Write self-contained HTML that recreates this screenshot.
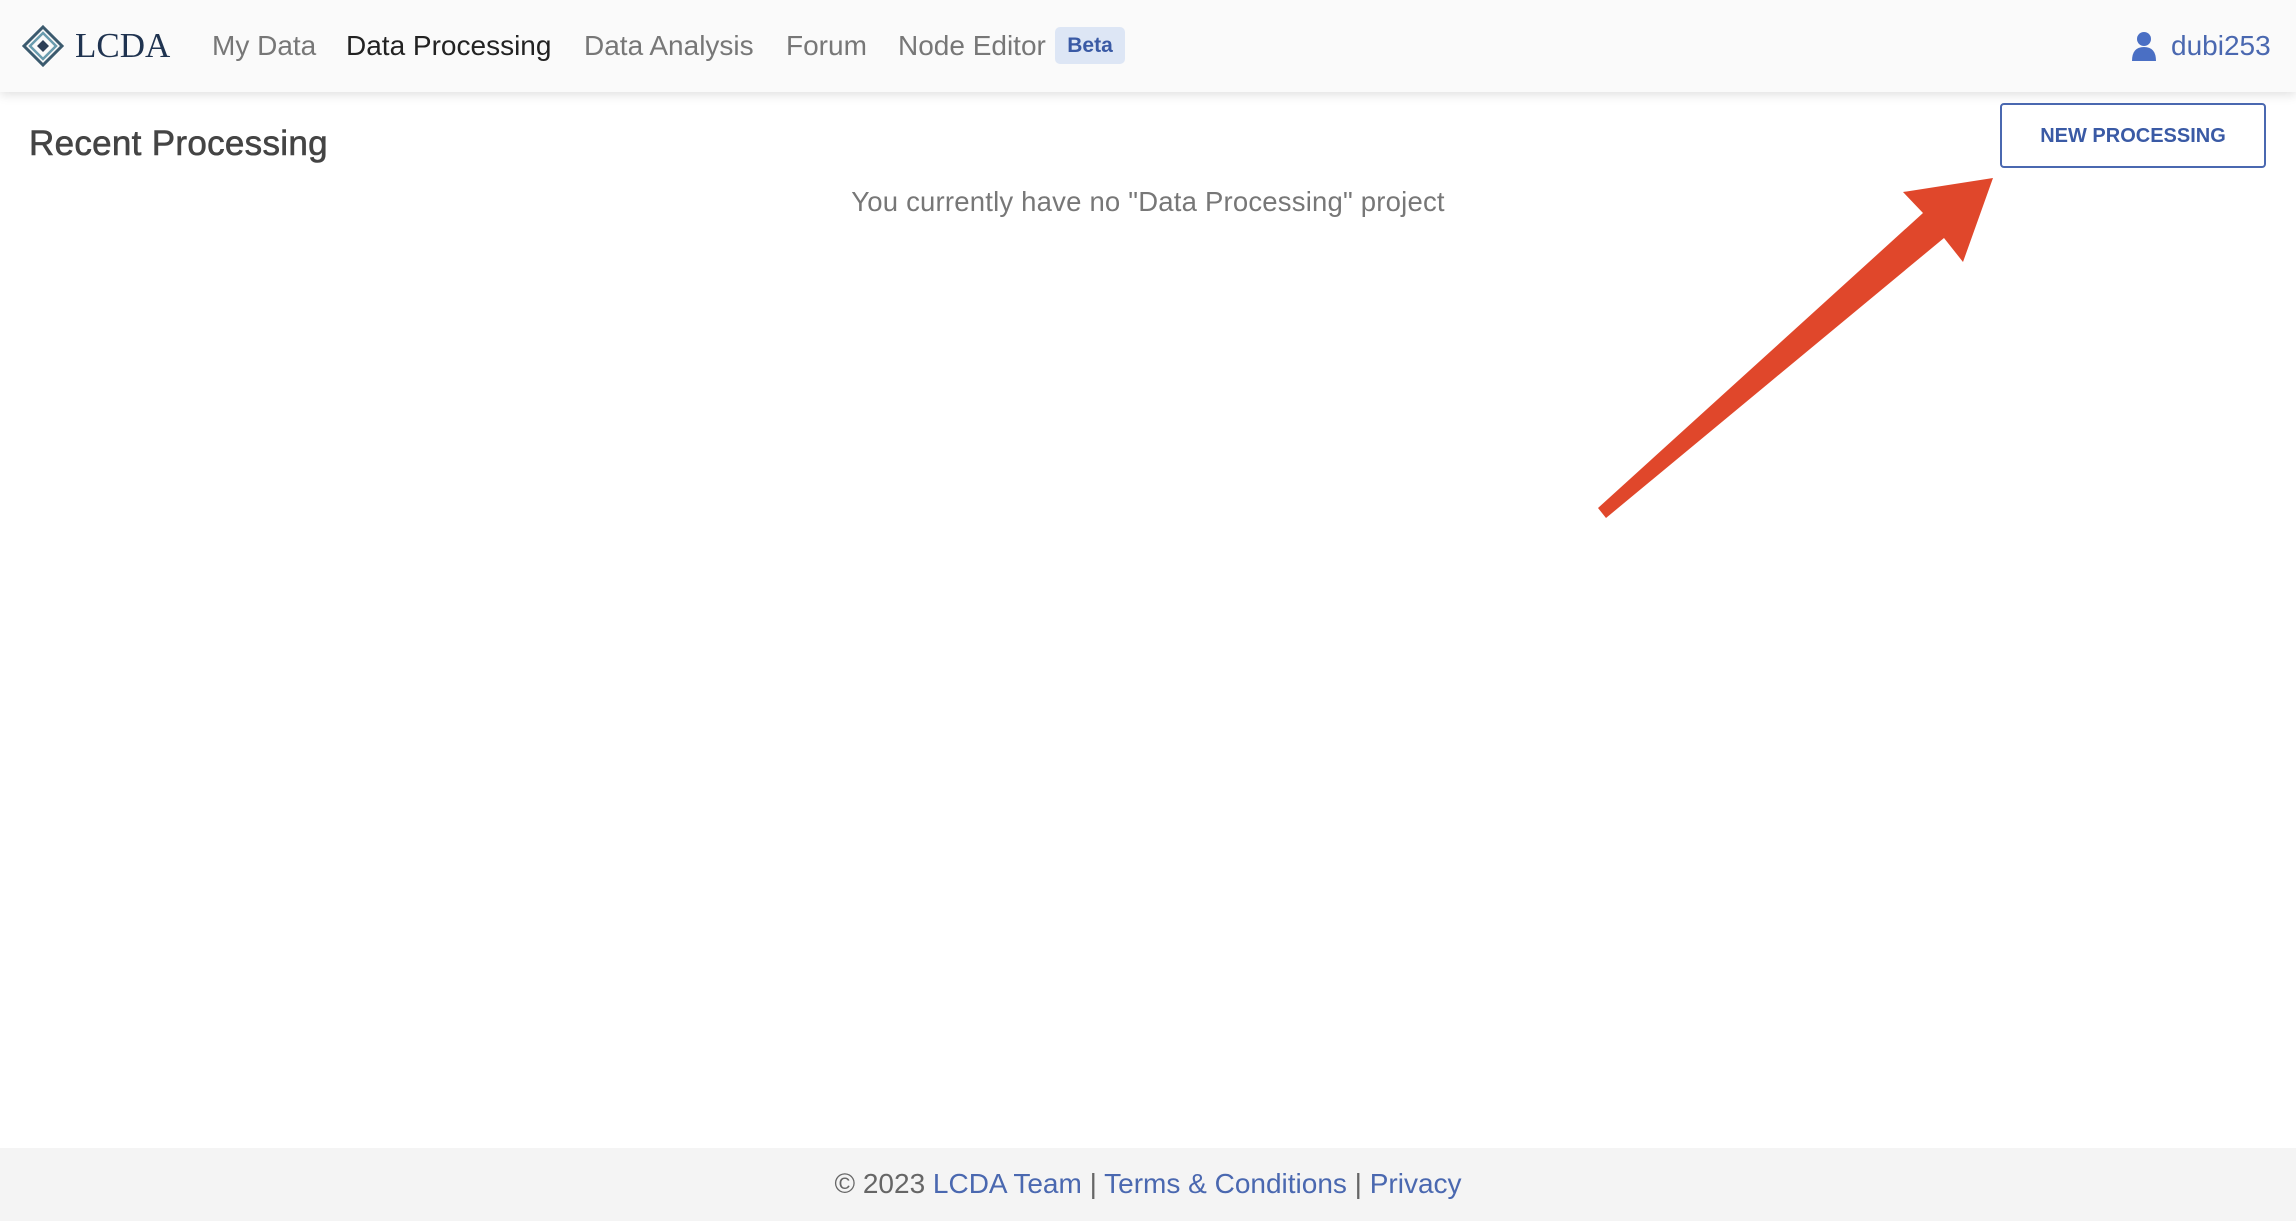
<!DOCTYPE html>
<html><head><meta charset="utf-8"><style>
html,body{margin:0;padding:0;width:2296px;height:1221px;background:#fff;overflow:hidden;font-family:"Liberation Sans",Roboto,sans-serif;position:relative}
.hdr{position:absolute;left:0;top:0;width:2296px;height:92px;background:#fafafa;box-shadow:0 3px 10px rgba(0,0,0,0.12)}
.t{position:absolute;white-space:nowrap;line-height:1}
.nav{font-size:28px;color:#777;top:32px}
.foot{position:absolute;left:0;top:1148px;width:2296px;height:73px;background:#f4f4f4}
.b{color:#4a68b0}
</style></head><body>
<div class="hdr">
<svg style="position:absolute;left:22px;top:25px" width="42" height="42" viewBox="0 0 42 42">
<path d="M21 2 L40 21 L21 40 L2 21 Z" fill="none" stroke="#3b5a6e" stroke-width="3"/>
<path d="M21 8 L34 21 L21 34 L8 21 Z" fill="none" stroke="#6a9cae" stroke-width="2.5"/>
<path d="M21 15 L27 21 L21 27 L15 21 Z" fill="#2c3e56"/>
</svg>
<div class="t" style="left:75px;top:28px;font-family:'Liberation Serif',serif;font-size:35px;color:#1f3350">LCDA</div>
<div class="t nav" style="left:212px">My Data</div>
<div class="t nav" style="left:346px;color:#222">Data Processing</div>
<div class="t nav" style="left:584px">Data Analysis</div>
<div class="t nav" style="left:786px">Forum</div>
<div class="t nav" style="left:898px">Node Editor</div>
<div style="position:absolute;left:1055px;top:27px;width:70px;height:37px;background:#dde6f5;border-radius:5px;color:#3a5aa5;font-weight:bold;font-size:21px;text-align:center;line-height:37px">Beta</div>
<svg style="position:absolute;left:2131px;top:31px" width="26" height="30" viewBox="0 0 26 30"><circle cx="13" cy="8" r="7" fill="#4a6fc4"/><path d="M1 30 Q1 16 13 16 Q25 16 25 30 Z" fill="#4a6fc4"/></svg>
<div class="t nav b" style="left:2171px">dubi253</div>
</div>
<div class="t" style="left:29px;top:126px;font-size:35px;color:#444;letter-spacing:0.3px;-webkit-text-stroke:0.6px #444">Recent Processing</div>
<div class="t" style="left:0;width:2296px;text-align:center;top:188px;font-size:27.5px;color:#777;letter-spacing:0.2px">You currently have no "Data Processing" project</div>
<div style="position:absolute;left:2000px;top:103px;width:262px;height:61px;border:2px solid #4a68b0;border-radius:4px;color:#3a5aa5;font-size:20px;font-weight:bold;text-align:center;line-height:63px">NEW PROCESSING</div>
<svg style="position:absolute;left:0;top:0" width="2296" height="1221"><polygon points="1993,178 1963,262 1944,238 1606,518 1598,508 1923,213 1903,192" fill="#e0472b"/></svg>
<div class="foot"><div class="t" style="left:0;width:2296px;text-align:center;top:22px;font-size:28px;color:#666">© 2023 <span class="b">LCDA Team</span> | <span class="b">Terms &amp; Conditions</span> | <span class="b">Privacy</span></div></div>
</body></html>
